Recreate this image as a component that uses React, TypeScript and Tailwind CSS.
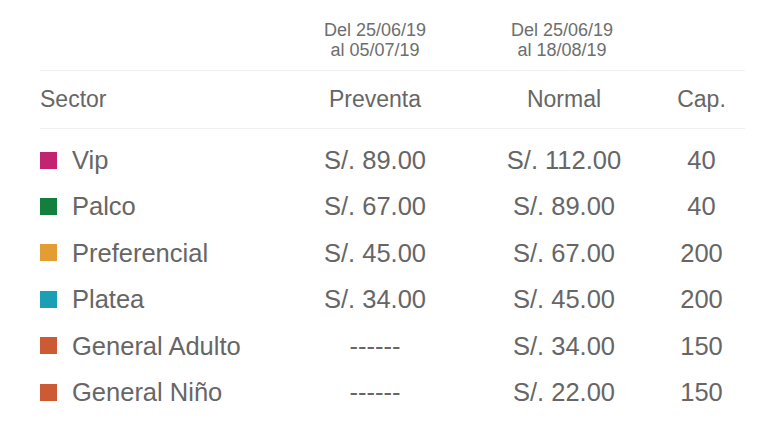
import React from 'react';

const rows = [
  { name: 'Vip', color: 'bg-[#c2246f]', preventa: 'S/. 89.00', normal: 'S/. 112.00', cap: '40' },
  { name: 'Palco', color: 'bg-[#137f3f]', preventa: 'S/. 67.00', normal: 'S/. 89.00', cap: '40' },
  { name: 'Preferencial', color: 'bg-[#e49d32]', preventa: 'S/. 45.00', normal: 'S/. 67.00', cap: '200' },
  { name: 'Platea', color: 'bg-[#1b9fb5]', preventa: 'S/. 34.00', normal: 'S/. 45.00', cap: '200' },
  { name: 'General Adulto', color: 'bg-[#cb5a35]', preventa: '------', normal: 'S/. 34.00', cap: '150' },
  { name: 'General Niño', color: 'bg-[#cb5a35]', preventa: '------', normal: 'S/. 22.00', cap: '150' },
];

const cols = 'grid grid-cols-[240px_190px_188px_87px]';

function App() {
  return (
    <div className="w-[766px] h-[421px] bg-white pl-10 pr-[21px] text-[#666666] font-['Liberation_Sans',Arial,sans-serif]">
      {/* Date ranges */}
      <div className={`${cols} pt-5 pb-[10px] border-b border-[#f0f0f0] text-[18px] leading-5 text-[#6e6e6e]`}>
        <div />
        <div className="text-center">
          Del 25/06/19
          <br />
          al 05/07/19
        </div>
        <div className="text-center pr-1">
          Del 25/06/19
          <br />
          al 18/08/19
        </div>
        <div />
      </div>

      {/* Column headers */}
      <div className={`${cols} h-[58px] items-center border-b border-[#f0f0f0] text-[23px]`}>
        <div>Sector</div>
        <div className="text-center">Preventa</div>
        <div className="text-center">Normal</div>
        <div className="text-center">Cap.</div>
      </div>

      {/* Rows */}
      <div className="pt-[8px]">
        {rows.map((row) => (
          <div key={row.name} className={`${cols} h-[46.4px] items-center text-[25.5px]`}>
            <div className="flex items-center gap-[15px]">
              <span className={`w-[17px] h-[17px] ${row.color}`} />
              <span>{row.name}</span>
            </div>
            <div className="text-center">{row.preventa}</div>
            <div className="text-center">{row.normal}</div>
            <div className="text-center">{row.cap}</div>
          </div>
        ))}
      </div>
    </div>
  );
}

export default App;
